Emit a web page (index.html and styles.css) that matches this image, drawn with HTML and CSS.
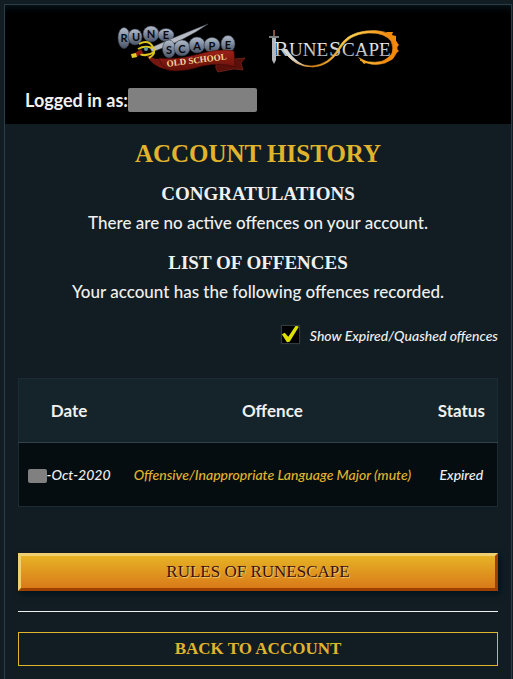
FILE: index.html
```html
<!DOCTYPE html>
<html lang="en">
<head>
    <meta charset="UTF-8">
    <meta name="viewport" content="width=device-width, initial-scale=1.0">
    <title>Account History</title>
    <link rel="stylesheet" href="styles.css">
</head>
<body>

<div class="panel">
    <header class="header">
        <div class="logos">
            <a href="#" aria-label="Old School RuneScape">
                <svg class="logo-osrs" width="130" height="52" viewBox="-1 0 130 52">
                    <defs>
                        <linearGradient id="stone" x1="0" y1="0" x2="0" y2="1">
                            <stop offset="0" stop-color="#b4bdcb"/>
                            <stop offset="0.5" stop-color="#7c889b"/>
                            <stop offset="1" stop-color="#485264"/>
                        </linearGradient>
                        <linearGradient id="ribbon" x1="0" y1="0" x2="0" y2="1">
                            <stop offset="0" stop-color="#9c2118"/>
                            <stop offset="1" stop-color="#651009"/>
                        </linearGradient>
                    </defs>
                    <!-- rune stones -->
                    <g fill="url(#stone)" stroke="#303a48" stroke-width="0.6">
                        <ellipse cx="7" cy="15" rx="6" ry="10.500"/>
                        <ellipse cx="18" cy="14" rx="7" ry="8"/>
                        <ellipse cx="34" cy="11" rx="8" ry="8"/>
                        <ellipse cx="49" cy="12" rx="8" ry="6.500"/>
                    </g>
                    <!-- sword -->
                    <path d="M33 25 Q60 13 91 1 Q67 18 35 29z" fill="#b6bbc3" stroke="#434852" stroke-width="0.5"/>
                    <g fill="url(#stone)" stroke="#303a48" stroke-width="0.6">
                        <ellipse cx="52" cy="26" rx="6.500" ry="9"/>
                        <ellipse cx="65" cy="25" rx="8" ry="8"/>
                        <ellipse cx="80" cy="22" rx="8" ry="8"/>
                        <ellipse cx="95" cy="22" rx="8" ry="7.500"/>
                        <ellipse cx="111" cy="21" rx="7" ry="8.500"/>
                    </g>
                    <g class="stone-text">
                        <text x="7" y="19">R</text>
                        <text x="19" y="18">U</text>
                        <text x="34" y="15">N</text>
                        <text x="49" y="16">E</text>
                        <text x="52" y="31">S</text>
                        <text x="65" y="30">C</text>
                        <text x="80" y="27">A</text>
                        <text x="95" y="27">P</text>
                        <text x="111" y="26">E</text>
                    </g>
                    <!-- ribbon -->
                    <path d="M100 40 L117 36 L128 35 L124 40 L126 47 L117 46 L101 49 Q97 44 100 40z" fill="#5a0f0a" stroke="#873023" stroke-width="0.6"/>
                    <path d="M28 29 Q34 37 45 36 L51 47 Q33 43 28 29z" fill="#751710"/>
                    <path d="M42 35 Q60 37 82 31 Q103 25 117 28 L118 44 Q105 39 85 43 Q64 50 50 47 Q43 42 42 35z" fill="url(#ribbon)" stroke="#3d0805" stroke-width="0.6"/>
                    <text class="school-text" x="80" y="40" transform="rotate(-7 80 40)">OLD SCHOOL</text>
                    <!-- hilt -->
                    <path d="M22 21 Q31 16 36 24 Q40 31 32 35 M21 26 Q28 22 35 25 M23 31 Q30 34 37 29" fill="none" stroke="#dcc51b" stroke-width="2"/>
                    <path d="M17 33 L25 28" stroke="#8f1712" stroke-width="4"/>
                    <path d="M14 31 L19 30 L20 34 L15 35z" fill="#e2ca26"/>
                    <circle cx="29" cy="26" r="2" fill="#5f9a9c"/>
                </svg>
            </a>
            <a href="#" aria-label="RuneScape">
                <svg class="logo-rs" width="132" height="40" viewBox="-1 0 132 40">
                    <defs>
                        <linearGradient id="flame" x1="0" y1="0" x2="1" y2="0">
                            <stop offset="0" stop-color="#e7e7e7"/>
                            <stop offset="0.25" stop-color="#dd8714"/>
                            <stop offset="0.6" stop-color="#ffd14c"/>
                            <stop offset="1" stop-color="#f07a08"/>
                        </linearGradient>
                        <linearGradient id="steel" x1="0" y1="0" x2="0" y2="1">
                            <stop offset="0" stop-color="#ffffff"/>
                            <stop offset="1" stop-color="#9da3a6"/>
                        </linearGradient>
                    </defs>
                    <path d="M3 9 L7 9 L7 31 L5 35 L3 31z" fill="#b3b7b9"/>
                    <path d="M5 1 L5 7" stroke="#85513a" stroke-width="2"/>
                    <path d="M0 8 L10 8" stroke="#a8aaac" stroke-width="1.500"/>
                    <path d="M13 20 Q22 34 37 37 L43 38 Q28 36 18 20z" fill="#d4d6d7"/>
                    <text class="rs-text rs-big" x="5" y="27">R</text>
                    <text class="rs-text" x="20" y="27">UNE</text>
                    <text class="rs-text rs-big" x="60" y="27">S</text>
                    <text class="rs-text" x="73" y="27">CAPE</text>
                    <!-- fiery tail -->
                    <path d="M15 21 Q25 37 43 37 Q59 36 69 20 Q77 4 97 2 Q119 -1 127 12 Q132 28 116 34 Q103 38 91 31 Q108 36 118 30 Q127 24 122 12 Q115 3 99 4 Q80 5 71 20 Q61 37 44 38 Q24 38 15 21z" fill="url(#flame)" stroke="url(#flame)" stroke-width="0.600"/>
                    <path d="M117 3 L124 3 L123 6 L127 7 L127 12 L130 16 L127 19 L130 22 L126 25 L124 30 L118 33 L112 34 L123 25 L125 14z" fill="#f28a0c"/>
                    <path d="M99 33 L89 28 L95 35z" fill="#f7a51d"/>
                </svg>
            </a>
        </div>
        <div class="login">Logged in as:<span class="hidden-name"></span></div>
    </header>

    <main class="content">
        <h1>Account History</h1>
        <h2>Congratulations</h2>
        <p>There are no active offences on your account.</p>
        <h2>List of Offences</h2>
        <p>Your account has the following offences recorded.</p>

        <div class="filter">
            <input type="checkbox" id="show-expired" checked>
            <label for="show-expired">Show Expired/Quashed offences</label>
        </div>

        <table class="offences">
            <thead>
                <tr>
                    <th class="date">Date</th>
                    <th class="offence">Offence</th>
                    <th class="status">Status</th>
                </tr>
            </thead>
            <tbody>
                <tr>
                    <td><span class="hidden-day"></span>-Oct-2020</td>
                    <td><a href="#">Offensive/Inappropriate Language Major (mute)</a></td>
                    <td>Expired</td>
                </tr>
            </tbody>
        </table>

        <button type="button" class="button">Rules of RuneScape</button>
        <hr>
        <button type="button" class="button-outline">Back to Account</button>
    </main>
</div>

</body>
</html>
```

FILE: styles.css
```css
* { box-sizing: border-box; }
body { margin: 0; padding: 4px 1px 0 4px; background-color: #111d23; color: #f0f0f0; font-family: Lato, sans-serif; font-size: 17px; line-height: 24px; }
h1, h2 { font-family: "Liberation Serif", serif; text-transform: uppercase; text-align: center; }
h1 { margin: 0 0 12px; color: #e1b42d; font-size: 25px; line-height: 32px; }
h2 { margin: 0; font-size: 19px; line-height: 24px; }
p { margin: 5px 0 16px; text-align: center; font-weight: 500; }
hr { margin: 20px 0; border: none; border-top: 1px solid #f0f0f0; }

.panel { min-height: calc(100vh - 4px); border: 1px solid #2b3d46; border-bottom: none; }
.header { padding: 16px 20px 12px; background-color: #000; box-shadow: inset 0 6px 6px -3px #07151c; }
.logos { display: flex; justify-content: center; gap: 22px; height: 55px; }
.logos a { display: flex; align-items: center; }
.login { display: flex; align-items: center; margin-top: 12px; font-size: 18px; font-weight: bold; }
.hidden-name { width: 129px; height: 24px; border-radius: 2px; background-color: #808080; }

.stone-text { fill: #080a0d; font: bold 11px Lato, sans-serif; text-anchor: middle; }
.school-text { fill: #f3d99d; font: bold 9px "Liberation Serif", serif; text-anchor: middle; }
.rs-text { fill: url(#steel); font: 19px "Liberation Serif", serif; }
.rs-big { font-size: 22px; }

.content { padding: 14px 13px 13px; }
.filter { display: flex; justify-content: flex-end; align-items: center; gap: 11px; margin: 20px 0 30px; font-size: 14px; font-style: italic; font-weight: 500; }
.filter input { appearance: none; width: 17px; height: 17px; margin: 0 0 4px; background-color: #000; box-shadow: 0 0 1px 1px #303a3f; cursor: pointer; }
.filter input:checked::before { content: ""; display: block; width: 17px; height: 17px; background-color: #dbe000; clip-path: polygon(0 52%, 17% 43%, 38% 66%, 82% 0, 100% 8%, 46% 96%, 30% 98%); }

.offences { width: 100%; margin-bottom: 46px; border: 1px solid #1b2b33; border-collapse: collapse; table-layout: fixed; background-color: #060d10; text-align: center; }
.offences th { height: 64px; padding: 0; border-bottom: 1px solid #2f434d; background-color: #15242a; }
.offences td { height: 64px; padding: 0; font-size: 14px; font-style: italic; font-weight: 500; white-space: nowrap; }
.offences a { color: #e1b42d; text-decoration: none; }
.offences .date { width: 21%; }
.offences .offence { width: 64%; }
.offences .status { width: 15%; }
.hidden-day { display: inline-block; width: 19px; height: 14px; border-radius: 2px; background-color: #808080; vertical-align: middle; }

.button, .button-outline { display: block; width: 100%; font-family: "Liberation Serif", serif; font-size: 17px; text-transform: uppercase; cursor: pointer; }
.button { height: 38px; border: 3px solid; border-color: #f0cf70 #9e4000 #9e4000 #f0cf70; background: linear-gradient(#e6b325, #d97a19); box-shadow: 2px 3px 6px #03121a; color: #3b1010; text-shadow: 1px 1px 1px #f0cf70; }
.button-outline { height: 34px; border: 1px solid #e1b42d; background: none; color: #e1b42d; font-weight: bold; }
```
